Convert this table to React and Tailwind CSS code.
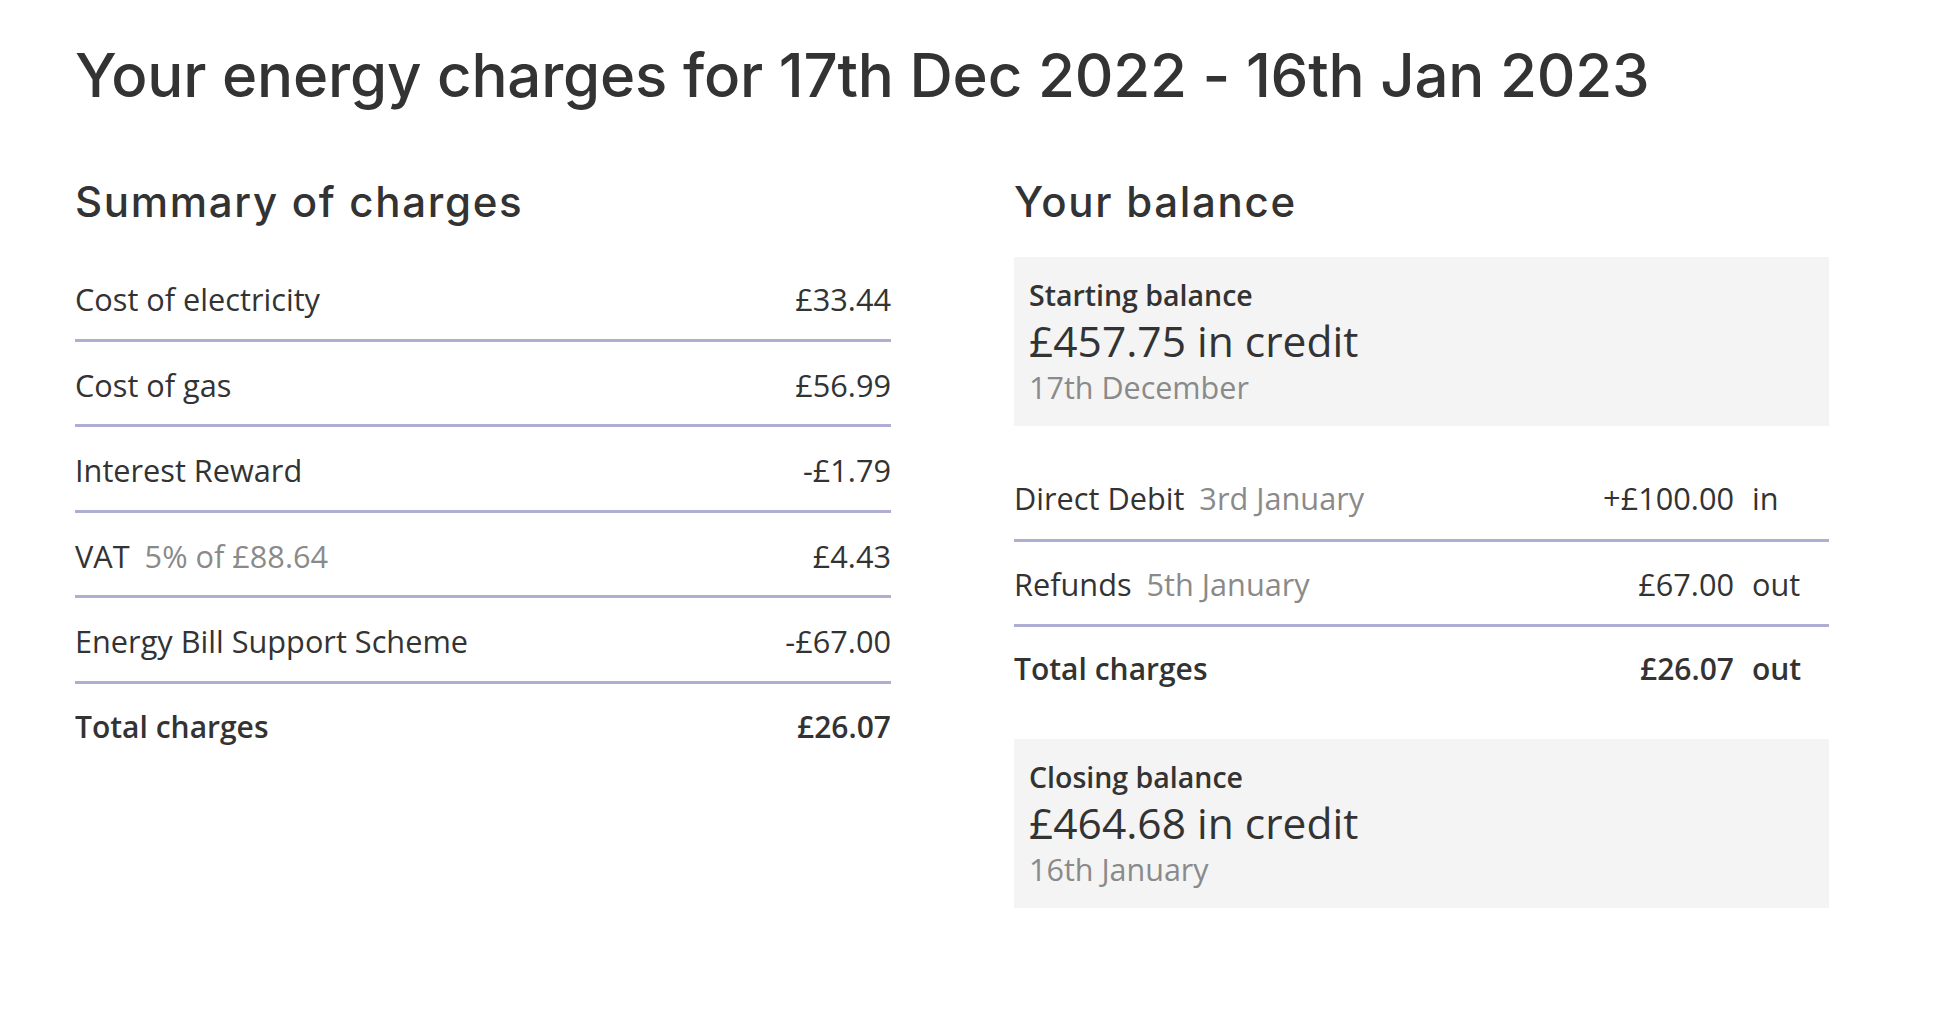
import React from "react";

const charges = [
  { label: "Cost of electricity", amount: "£33.44" },
  { label: "Cost of gas", amount: "£56.99" },
  { label: "Interest Reward", amount: "-£1.79" },
  { label: "VAT", note: "5% of £88.64", amount: "£4.43" },
  { label: "Energy Bill Support Scheme", amount: "-£67.00" },
];

const movements = [
  { label: "Direct Debit", note: "3rd January", amount: "+£100.00", dir: "in" },
  { label: "Refunds", note: "5th January", amount: "£67.00", dir: "out" },
];

const heading = "font-['Inter',sans-serif] font-medium text-[#333333]";

const BalanceBox = ({ title, amount, date }) => (
  <div className="bg-[#f4f4f4] px-[15px] pt-[20px] pb-[20px]">
    <p className="text-[28.5px] leading-[36px] font-semibold">{title}</p>
    <p className="text-[42.5px] leading-[55px]">{amount}</p>
    <p className="text-[30.5px] leading-[38px] text-[#8a8a8a]">{date}</p>
  </div>
);

const App = () => {
  return (
    <div className="min-h-screen bg-white text-[#333333] font-['Open_Sans',sans-serif] pl-[75px] pt-[39px]">
      <h1 className={`${heading} text-[60px] leading-[72px] tracking-[-0.2px]`}>
        Your energy charges for 17th Dec 2022 - 16th Jan 2023
      </h1>

      <div className="flex gap-[123px] mt-[66px]">
        {/* Summary of charges */}
        <div className="w-[816px]">
          <h2 className={`${heading} text-[42px] leading-[50px] tracking-[1.7px]`}>Summary of charges</h2>
          <ul className="mt-[29px]">
            {charges.map((c) => (
              <li
                key={c.label}
                className="flex justify-between pt-[22px] pb-[18.6px] border-b-[3px] border-[#adaed1] text-[30.7px] leading-[42px]"
              >
                <span className="flex gap-[15px]">
                  {c.label}
                  {c.note && <span className="text-[#8a8a8a]">{c.note}</span>}
                </span>
                <span>{c.amount}</span>
              </li>
            ))}
            <li className="flex justify-between pt-[22px] pb-[18px] text-[30px] leading-[42px] font-semibold">
              <span>Total charges</span>
              <span>£26.07</span>
            </li>
          </ul>
        </div>

        {/* Your balance */}
        <div className="w-[815px]">
          <h2 className={`${heading} text-[42px] leading-[50px] tracking-[1.7px]`}>Your balance</h2>
          <div className="mt-[30px]">
            <BalanceBox title="Starting balance" amount="£457.75 in credit" date="17th December" />
          </div>
          <ul className="mt-[30px]">
            {movements.map((m) => (
              <li
                key={m.label}
                className="flex justify-between pt-[21px] pb-[19.6px] border-b-[3px] border-[#adaed1] text-[30.7px] leading-[42px]"
              >
                <span className="flex gap-[15px]">
                  {m.label}
                  <span className="text-[#8a8a8a]">{m.note}</span>
                </span>
                <span className="flex">
                  <span className="text-right">{m.amount}</span>
                  <span className="w-[77px] ml-[18px]">{m.dir}</span>
                </span>
              </li>
            ))}
            <li className="flex justify-between pt-[21px] pb-[19px] text-[30px] leading-[42px] font-semibold">
              <span>Total charges</span>
              <span className="flex">
                <span className="text-right">£26.07</span>
                <span className="w-[77px] ml-[18px]">out</span>
              </span>
            </li>
          </ul>
          <div className="mt-[30px]">
            <BalanceBox title="Closing balance" amount="£464.68 in credit" date="16th January" />
          </div>
        </div>
      </div>
    </div>
  );
};

export default App;
